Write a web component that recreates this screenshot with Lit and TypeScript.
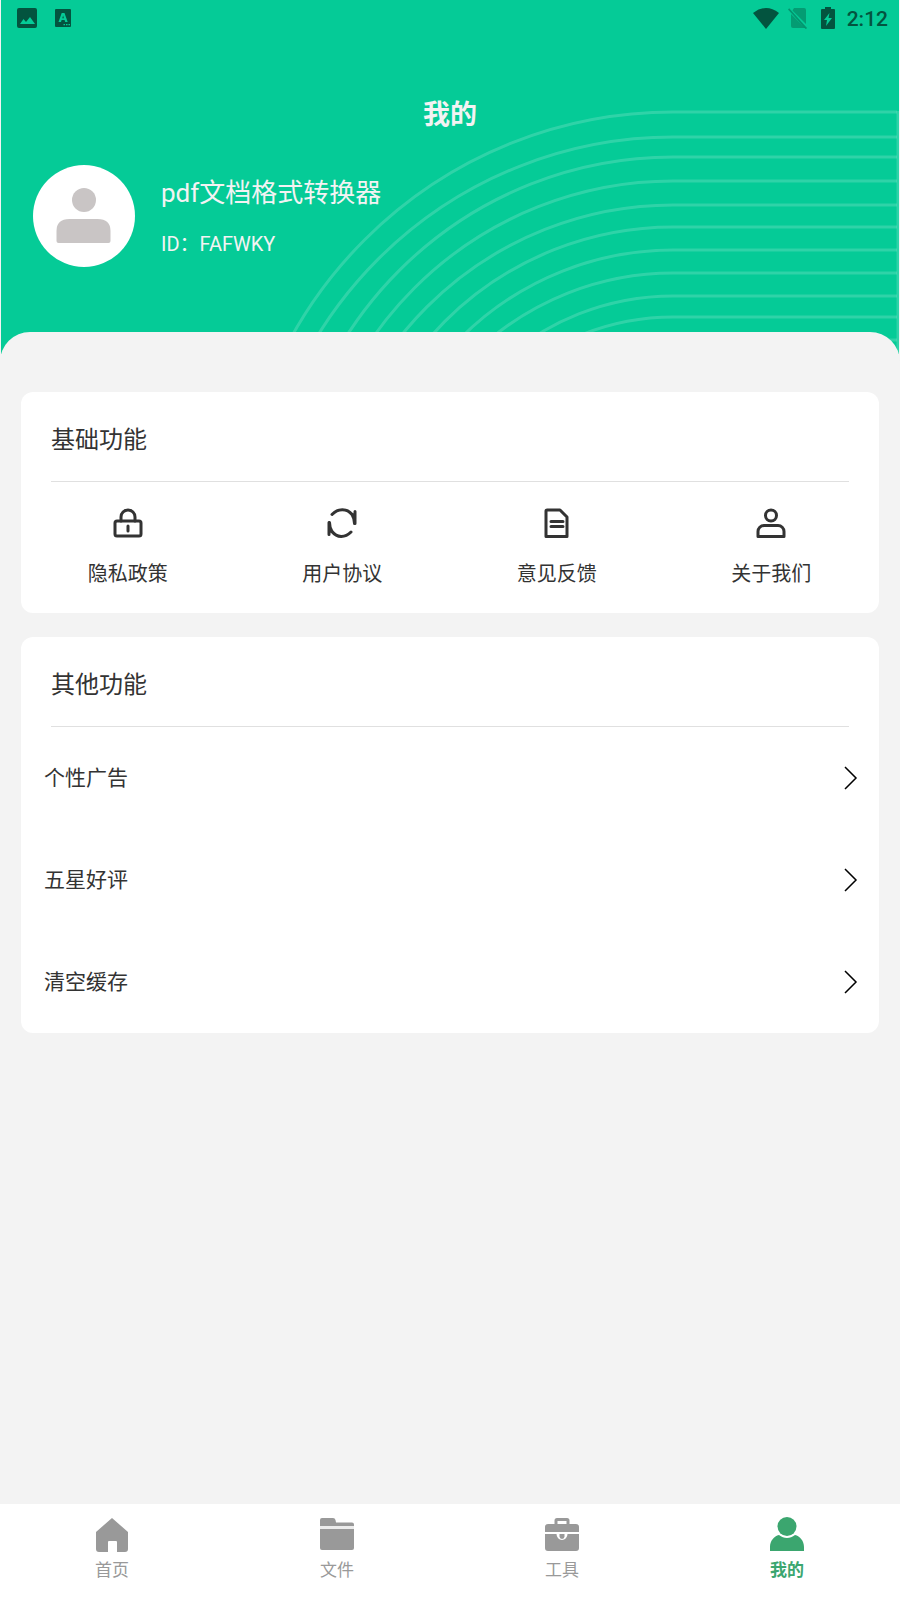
import { LitElement, html, css, svg } from "lit";
import { customElement, state } from "lit/decorators.js";
import { classMap } from "lit/directives/class-map.js";

// Arcs of the header: [top of the arc, radius]
const ARCS: [number, number][] = [
  [112, 436], [137, 417], [157, 387], [181, 366], [205, 348],
  [227, 323], [250, 300], [273, 286], [296, 256], [317, 244], [340, 230],
];

const lockIcon = svg`<path d="M8 13V9a7 7 0 0 1 14 0v4"/><rect x="2" y="13" width="26" height="15" rx="2"/><path d="M15 18v5"/>`;
const syncIcon = svg`<path d="M5 6.500C11 0 20 0 25 6.500c1.500 2.500 2.500 5 2.500 9M28 3.500v12M25 6l3 5"/><path d="M24 24c-6 6-14 6-19-.5-1.500-2.500-2.500-5-2.500-9M2 14.500v12M5 24l-3-5"/>`;
const noteIcon = svg`<path d="M5 2h13l7 7v19.500H4V3a1 1 0 0 1 1-1zM9 13.500h12M9 18.500h12"/>`;
const aboutIcon = svg`<circle cx="15" cy="7.500" r="5.500"/><path d="M2 28.500v-5a6 6 0 0 1 6-6h14a6 6 0 0 1 6 6v5z"/>`;

const homeIcon = svg`<path d="M18 1l16 14v17q0 3-3 3h-8V25q0-1-1-1h-7q-1 0-1 1v10H5q-3 0-3-3V15z"/>`;
const folderIcon = svg`<path d="M1 9V3q0-2 2-2h11q2 0 2.500 2l.5 2.500h16q2 0 2 2V9z"/><path fill="#ececec" d="M1 9h34v3H1z"/><path d="M1 12h34v19q0 2-2 2H3q-2 0-2-2z"/>`;
const toolIcon = svg`<path fill-rule="evenodd" d="M10.500 7V3.500q0-2.500 2.500-2.500h10q2.500 0 2.500 2.500V7H32q3 0 3 3v5H1v-5q0-3 3-3zM13.500 7h9V4h-9zM1 17h11.500a5.500 6 0 0 0 11 0H35v14q0 3-3 3H4q-3 0-3-3z"/><path d="M15.500 17h5v2.500a2.500 2.500 0 0 1-5 0z"/>`;
const mineIcon = svg`<circle cx="18" cy="9.500" r="9.500"/><path d="M1 34v-4c0-6 4-11 9-12 5 4 11 4 16 0 5 1 9 6 9 12v4z"/>`;

@customElement("app-root")
export class AppRoot extends LitElement {
  static styles = css`
    :host {
      display: flex;
      flex-direction: column;
      min-height: 100vh;
      background: #f3f3f3;
      color: #333;
      font-family: Roboto, "Noto Sans CJK SC", sans-serif;
    }
    * { box-sizing: border-box; }
    h1, h2, p { margin: 0; font-weight: 400; }
    button { border: 0; padding: 0; background: none; font: inherit; color: inherit; cursor: pointer; }
    svg { display: block; flex: none; }

    .hero { display: grid; height: 354px; margin: 0 1px; background: #05cb97; color: #f3f3f3; overflow: hidden; }
    .hero > * { grid-area: 1 / 1; min-width: 0; }
    .arcs { justify-self: end; fill: none; stroke: #fff; stroke-opacity: .17; stroke-width: 3; }
    .status { display: flex; align-items: center; height: 36px; padding: 0 11px 0 15px; color: #03543f; fill: #03543f; }
    .notices { display: flex; align-items: center; gap: 16px; margin-right: auto; }
    .system { display: flex; align-items: center; gap: 8px; }
    .clock { padding-top: 1px; font-size: 21px; font-weight: 500; line-height: 24px; }
    .title { padding: 58px 0 29px; font-size: 27px; font-weight: 700; line-height: 42px; text-align: center; }
    .profile { display: flex; align-items: center; gap: 26px; padding-left: 32px; }
    .name { font-size: 26px; line-height: 38px; }
    .uid { margin-top: 18px; font-size: 20px; line-height: 28px; }

    main { flex: 1; display: flex; flex-direction: column; gap: 24px; margin-top: -22px; padding: 60px 21px 24px; border-radius: 30px 30px 0 0; background: #f3f3f3; }
    .card { border-radius: 12px; background: #fff; }
    .card-title { margin: 0 30px; padding: 30px 0 23px; border-bottom: 1px solid #e0e0e0; font-size: 24px; line-height: 36px; }
    .tiles { display: grid; grid-template-columns: repeat(4, 1fr); }
    .tile { display: flex; flex-direction: column; align-items: center; gap: 20px; height: 131px; padding: 26px 1px 0 0; font-size: 20px; line-height: 30px; }
    .line-icon { fill: none; stroke: #333; stroke-width: 3; stroke-linecap: round; stroke-linejoin: round; }
    .row { display: flex; align-items: center; justify-content: space-between; width: 100%; height: 102px; padding: 0 21px 0 23px; font-size: 21px; line-height: 30px; }
    .chevron { fill: none; stroke: #000; stroke-width: 1.500; }

    nav { position: sticky; bottom: 0; display: grid; grid-template-columns: repeat(4, 1fr); background: #fff; }
    .tab { display: flex; flex-direction: column; align-items: center; gap: 5px; height: 96px; padding: 13px 1px 0 0; color: #999; fill: #999; font-size: 17px; line-height: 24px; }
    .tab.active { color: #3ba66f; fill: #3ba66f; font-weight: 700; }
  `;

  @state() private tab = 3;

  private tiles = [
    { label: "隐私政策", icon: lockIcon },
    { label: "用户协议", icon: syncIcon },
    { label: "意见反馈", icon: noteIcon },
    { label: "关于我们", icon: aboutIcon },
  ];
  private rows = ["个性广告", "五星好评", "清空缓存"];
  private tabs = [
    { label: "首页", icon: homeIcon },
    { label: "文件", icon: folderIcon },
    { label: "工具", icon: toolIcon },
    { label: "我的", icon: mineIcon },
  ];

  render() {
    return html`
      <header class="hero">
        <svg class="arcs" width="640" height="354" viewBox="259 0 640 354" aria-hidden="true">
          ${ARCS.map(([y, r]) => svg`<path d="M${673 - r} ${y + r}A${r} ${r} 0 0 1 673 ${y}H897"/>`)}
          <path d="M898 111V354"/>
        </svg>
        <div>
          <div class="status">
            <div class="notices">
              <svg width="22" height="22" viewBox="0 0 22 22"><path fill-rule="evenodd" d="M3 1h16q2 0 2 2v16q0 2-2 2H3q-2 0-2-2V3q0-2 2-2zM4 17h15l-5-7-4 5-2.500-3z"/></svg>
              <svg width="18" height="20" viewBox="0 0 18 20"><path fill-rule="evenodd" d="M2 1h14q1 0 1 1v16q0 1-1 1H2q-1 0-1-1V2q0-1 1-1zM4.500 14h2.500l.6-2h3l.6 2h2.500L10.500 5H7.700zM8.300 10.300L9.100 7.500l.8 2.800zM9.500 16v1.300H11V16zM12 16v1.300h1.500V16zM14.500 16v1.300H16V16z"/></svg>
            </div>
            <div class="system">
              <svg width="26" height="22" viewBox="0 0 26 22"><path d="M0 6Q13-4 26 6L13 22z"/></svg>
              <svg width="22" height="22" viewBox="0 0 22 22"><path opacity=".4" d="M7 1h10q2 0 2 2v14L5.500 3.500zM4 7l14 14H6q-2 0-2-2z"/><path opacity=".45" d="M1 2.500l1.200-1.200L20 21l-1.200 1.200z"/></svg>
              <svg width="22" height="24" viewBox="0 0 22 24"><path fill-rule="evenodd" d="M8 1h6v2h3q1 0 1 1v18q0 1-1 1H5q-1 0-1-1V4q0-1 1-1h3zM12.500 7L7 14h3l-1 6 6-8h-3.500z"/></svg>
              <time class="clock">2:12</time>
            </div>
          </div>
          <h1 class="title">我的</h1>
          <div class="profile">
            <svg width="102" height="102" viewBox="0 0 102 102" role="img" aria-label="头像">
              <circle cx="51" cy="51" r="51" fill="#fff"/>
              <g fill="#c9c5c5"><circle cx="51" cy="35" r="12"/><path d="M23.500 66q0-12 13-12h28q13 0 13 12v10q0 2-2 2h-50q-2 0-2-2z"/></g>
            </svg>
            <div>
              <p class="name">pdf文档格式转换器</p>
              <p class="uid">ID：FAFWKY</p>
            </div>
          </div>
        </div>
      </header>
      <main>
        <section class="card">
          <h2 class="card-title">基础功能</h2>
          <div class="tiles">
            ${this.tiles.map((t) => html`<button class="tile" type="button">
              <svg class="line-icon" width="30" height="31" viewBox="0 0 30 31" aria-hidden="true">${t.icon}</svg>${t.label}
            </button>`)}
          </div>
        </section>
        <section class="card">
          <h2 class="card-title">其他功能</h2>
          ${this.rows.map((label) => html`<button class="row" type="button">
            ${label}<svg class="chevron" width="14" height="24" viewBox="0 0 14 24" aria-hidden="true"><path d="M1 1l11 11L1 23"/></svg>
          </button>`)}
        </section>
      </main>
      <nav>
        ${this.tabs.map((t, i) => html`<button type="button" class=${classMap({ tab: true, active: i === this.tab })} @click=${() => (this.tab = i)}>
          <svg width="36" height="36" viewBox="0 0 36 36" aria-hidden="true">${t.icon}</svg>${t.label}
        </button>`)}
      </nav>
    `;
  }
}
